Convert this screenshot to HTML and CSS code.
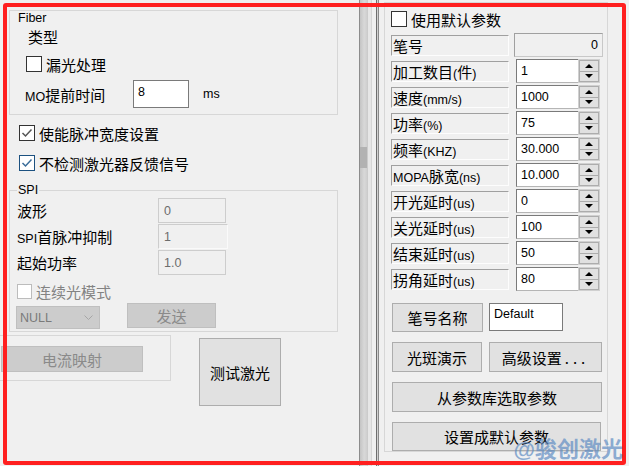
FILE: index.html
```html
<!DOCTYPE html>
<html lang="zh-CN">
<head>
<meta charset="utf-8">
<title>Fiber 参数设置</title>
<link rel="stylesheet" href="styles.css">
</head>
<body>
<div class="app">
  <section class="left">
    <div class="fiber">
      <div class="fiber-title l">Fiber</div>
      <div class="type-label">类型</div>
      <label class="chk chk-leak"><span class="box"></span><span class="chk-text">漏光处理</span></label>
      <div class="mo-row">
        <span class="mo-label"><span class="l">MO</span>提前时间</span>
        <span class="edit mo-edit">8</span>
        <span class="l unit">ms</span>
      </div>
    </div>

    <label class="chk chk-pulse"><span class="box"><svg width="14" height="14" viewBox="0 0 14 14"><polyline points="2.5,7 5.5,10 11.5,3.5" fill="none" stroke="#555" stroke-width="1.5"/></svg></span><span class="chk-text">使能脉冲宽度设置</span></label>
    <label class="chk chk-feedback"><span class="box focus"><svg width="14" height="14" viewBox="0 0 14 14"><polyline points="2.5,7 5.5,10 11.5,3.5" fill="none" stroke="#3a6d9a" stroke-width="1.5"/></svg></span><span class="chk-text">不检测激光器反馈信号</span></label>

    <fieldset class="spi">
      <legend class="l">SPI</legend>
      <div class="spi-row"><span class="spi-label">波形</span><span class="dis-edit">0</span></div>
      <div class="spi-row"><span class="spi-label"><span class="l">SPI</span>首脉冲抑制</span><span class="dis-edit wide">1</span></div>
      <div class="spi-row"><span class="spi-label">起始功率</span><span class="dis-edit">1.0</span></div>
      <label class="chk chk-cw disabled"><span class="box"></span><span class="chk-text">连续光模式</span></label>
      <div class="spi-actions">
        <div class="combo"><span class="l">NULL</span><svg width="9" height="5" viewBox="0 0 9 5"><polyline points="0.5,0.5 4.5,4.5 8.5,0.5" fill="none" stroke="#a6a6a6"/></svg></div>
        <button class="btn btn-dis send-btn">发送</button>
      </div>
    </fieldset>

    <div class="bottom-row">
      <div class="map-group"><button class="btn btn-dis map-btn">电流映射</button></div>
      <button class="btn test-btn">测试激光</button>
    </div>
  </section>

  <div class="scroll"><div class="thumb"></div></div>
  <div class="splitter"></div>

  <section class="right">
    <div class="param-group">
      <label class="chk chk-default"><span class="box"></span><span class="chk-text">使用默认参数</span></label>
      <div class="params">
        <div class="prow"><span class="pname">笔号</span><span class="pvalue l">0</span></div>
        <div class="prow"><span class="pname">加工数目<span class="l">(</span>件<span class="l">)</span></span><span class="pinput">1</span><span class="spin"><span class="sb"><svg width="8" height="4" viewBox="0 0 8 4"><polygon points="4,0 8,4 0,4" fill="#000"/></svg></span><span class="sb"><svg width="8" height="4" viewBox="0 0 8 4"><polygon points="0,0 8,0 4,4" fill="#000"/></svg></span></span></div>
        <div class="prow"><span class="pname">速度<span class="l">(mm/s)</span></span><span class="pinput">1000</span><span class="spin"><span class="sb"><svg width="8" height="4" viewBox="0 0 8 4"><polygon points="4,0 8,4 0,4" fill="#000"/></svg></span><span class="sb"><svg width="8" height="4" viewBox="0 0 8 4"><polygon points="0,0 8,0 4,4" fill="#000"/></svg></span></span></div>
        <div class="prow"><span class="pname">功率<span class="l">(%)</span></span><span class="pinput">75</span><span class="spin"><span class="sb"><svg width="8" height="4" viewBox="0 0 8 4"><polygon points="4,0 8,4 0,4" fill="#000"/></svg></span><span class="sb"><svg width="8" height="4" viewBox="0 0 8 4"><polygon points="0,0 8,0 4,4" fill="#000"/></svg></span></span></div>
        <div class="prow"><span class="pname">频率<span class="l">(KHZ)</span></span><span class="pinput">30.000</span><span class="spin"><span class="sb"><svg width="8" height="4" viewBox="0 0 8 4"><polygon points="4,0 8,4 0,4" fill="#000"/></svg></span><span class="sb"><svg width="8" height="4" viewBox="0 0 8 4"><polygon points="0,0 8,0 4,4" fill="#000"/></svg></span></span></div>
        <div class="prow"><span class="pname"><span class="l">MOPA</span>脉宽<span class="l">(ns)</span></span><span class="pinput">10.000</span><span class="spin"><span class="sb"><svg width="8" height="4" viewBox="0 0 8 4"><polygon points="4,0 8,4 0,4" fill="#000"/></svg></span><span class="sb"><svg width="8" height="4" viewBox="0 0 8 4"><polygon points="0,0 8,0 4,4" fill="#000"/></svg></span></span></div>
        <div class="prow"><span class="pname">开光延时<span class="l">(us)</span></span><span class="pinput">0</span><span class="spin"><span class="sb"><svg width="8" height="4" viewBox="0 0 8 4"><polygon points="4,0 8,4 0,4" fill="#000"/></svg></span><span class="sb"><svg width="8" height="4" viewBox="0 0 8 4"><polygon points="0,0 8,0 4,4" fill="#000"/></svg></span></span></div>
        <div class="prow"><span class="pname">关光延时<span class="l">(us)</span></span><span class="pinput">100</span><span class="spin"><span class="sb"><svg width="8" height="4" viewBox="0 0 8 4"><polygon points="4,0 8,4 0,4" fill="#000"/></svg></span><span class="sb"><svg width="8" height="4" viewBox="0 0 8 4"><polygon points="0,0 8,0 4,4" fill="#000"/></svg></span></span></div>
        <div class="prow"><span class="pname">结束延时<span class="l">(us)</span></span><span class="pinput">50</span><span class="spin"><span class="sb"><svg width="8" height="4" viewBox="0 0 8 4"><polygon points="4,0 8,4 0,4" fill="#000"/></svg></span><span class="sb"><svg width="8" height="4" viewBox="0 0 8 4"><polygon points="0,0 8,0 4,4" fill="#000"/></svg></span></span></div>
        <div class="prow"><span class="pname">拐角延时<span class="l">(us)</span></span><span class="pinput">80</span><span class="spin"><span class="sb"><svg width="8" height="4" viewBox="0 0 8 4"><polygon points="4,0 8,4 0,4" fill="#000"/></svg></span><span class="sb"><svg width="8" height="4" viewBox="0 0 8 4"><polygon points="0,0 8,0 4,4" fill="#000"/></svg></span></span></div>
      </div>
      <div class="brow brow-a">
        <button class="btn pen-btn">笔号名称</button>
        <span class="edit name-edit">Default</span>
      </div>
      <div class="brow">
        <button class="btn spot-btn">光斑演示</button>
        <button class="btn adv-btn">高级设置<span class="dots">...</span></button>
      </div>
      <div class="brow">
        <button class="btn lib-btn">从参数库选取参数</button>
      </div>
      <div class="brow">
        <button class="btn def-btn">设置成默认参数</button>
      </div>
    </div>
  </section>
</div>
<div class="frame"></div>
<div class="watermark">@骏创激光</div>
</body>
</html>
```

FILE: styles.css
```css
html, body {
  margin: 0;
  padding: 0;
}
body {
  width: 629px;
  height: 466px;
  overflow: hidden;
  background: #f0f0f0;
  color: #000;
  font-family: "Noto Sans CJK SC", sans-serif;
  font-size: 15px;
  position: relative;
}
.l {
  font-family: "Liberation Sans", "Noto Sans CJK SC", sans-serif;
  font-size: 12.5px;
}
.app {
  display: flex;
  height: 466px;
}

/* ---------- left panel ---------- */
.left {
  width: 359px;
  flex: none;
}
.fiber {
  box-sizing: border-box;
  margin: 10px 0 0 9px;
  width: 329px;
  height: 105px;
  border: 1px solid #d7d7d7;
}
.fiber-title {
  height: 14px;
  line-height: 14px;
  padding-left: 8px;
}
.type-label {
  height: 24px;
  line-height: 24px;
  margin-left: 18px;
}
.chk {
  display: flex;
  align-items: center;
  white-space: nowrap;
}
.chk .box {
  box-sizing: border-box;
  width: 16px;
  height: 16px;
  border: 1px solid #333;
  background: #fff;
  display: flex;
  align-items: center;
  justify-content: center;
  flex: none;
}
.chk .box.focus {
  border-color: #1c5180;
}
.chk-text {
  margin-left: 4px;
}
.chk-leak {
  height: 24px;
  margin: 3px 0 0 16px;
}
.mo-row {
  display: flex;
  align-items: center;
  height: 28px;
  margin: 4px 0 0 15px;
}
.mo-label {
  width: 108px;
  white-space: nowrap;
}
.edit {
  box-sizing: border-box;
  background: #fff;
  border: 1px solid #7a7a7a;
  font-family: "Liberation Sans", sans-serif;
  font-size: 12.5px;
  line-height: 14px;
  padding: 4px 4px;
}
.mo-edit {
  width: 56px;
  height: 28px;
}
.unit {
  margin-left: 14px;
}
.chk-pulse {
  height: 22px;
  margin: 7px 0 0 19px;
}
.chk-feedback {
  height: 22px;
  margin: 8px 0 0 19px;
}

.spi {
  box-sizing: border-box;
  margin: 9px 0 0 9px;
  width: 329px;
  padding: 0 0 2px 0;
  border: 1px solid #d7d7d7;
}
.spi legend {
  padding: 0 1px;
  margin-left: 7px;
  line-height: 14px;
  height: 14px;
}
.spi-row {
  display: flex;
  align-items: center;
  height: 25px;
  margin-top: 1px;
}
.spi-label {
  width: 141px;
  margin-left: 7px;
  white-space: nowrap;
}
.dis-edit {
  box-sizing: border-box;
  width: 68px;
  height: 25px;
  border: 1px solid #cdcdcd;
  background: #f0f0f0;
  color: #6d6d6d;
  font-family: "Liberation Sans", sans-serif;
  font-size: 12.5px;
  display: flex;
  align-items: center;
  padding-left: 5px;
}
.dis-edit.wide {
  width: 70px;
  border-right-color: #fafafa;
  border-bottom-color: #fafafa;
}
.chk-cw {
  height: 20px;
  margin: 6px 0 0 7px;
}
.chk.disabled .box {
  width: 15px;
  height: 15px;
  border-color: #bcbcbc;
}
.chk.disabled .chk-text {
  color: #838383;
}
.spi-actions {
  display: flex;
  align-items: flex-start;
  height: 26px;
  margin-top: 2px;
}
.combo {
  box-sizing: border-box;
  margin: 3px 0 0 6px;
  width: 84px;
  height: 23px;
  background: #cccccc;
  border: 1px solid #bfbfbf;
  color: #7a7a7a;
  display: flex;
  align-items: center;
  justify-content: space-between;
  padding: 0 6px 0 3px;
}
.btn {
  box-sizing: border-box;
  font-family: "Noto Sans CJK SC", sans-serif;
  font-size: 15px;
  color: #000;
  background: #e1e1e1;
  border: 1px solid #adadad;
  padding: 0;
  margin: 0;
  display: flex;
  align-items: center;
  justify-content: center;
  white-space: nowrap;
}
.btn-dis {
  background: #cccccc;
  border-color: #bfbfbf;
  color: #8a8a8a;
}
.send-btn {
  width: 89px;
  height: 25px;
  margin-left: 27px;
}
.bottom-row {
  display: flex;
  align-items: flex-start;
}
.map-group {
  box-sizing: border-box;
  width: 171px;
  height: 46px;
  margin-top: 3px;
  border: 1px solid #d7d7d7;
  border-left: none;
  padding: 10px 0 0 1px;
}
.map-btn {
  width: 142px;
  height: 26px;
}
.test-btn {
  width: 82px;
  height: 68px;
  margin: 6px 0 0 28px;
}

/* ---------- scrollbar & splitter ---------- */
.scroll {
  box-sizing: border-box;
  width: 8px;
  flex: none;
  border-left: 1px solid #8c8c8c;
  background: linear-gradient(to right, #c4c4c4, #d8d8d8 60%, #cfcfcf);
}
.thumb {
  margin-top: 147px;
  height: 21px;
  background: #b2b2b2;
}
.splitter {
  width: 13px;
  flex: none;
  background: linear-gradient(to right,
    #cbcbcb 0 1px, #e6e6e6 1px 4px, #d6d6d6 4px 5px, #f0f0f0 5px 9px,
    #6e6e6e 9px 10px, #d2d2d2 10px 11px, #8a8a8a 11px 12px, #f0f0f0 12px 13px);
}

/* ---------- right panel ---------- */
.right {
  flex: 1;
  padding-left: 4px;
}
.param-group {
  box-sizing: border-box;
  margin-top: 2px;
  width: 224px;
  height: 450px;
  border: 1px solid #d7d7d7;
}
.chk-default {
  height: 20px;
  margin: 6px 0 0 6px;
}
.params {
  display: flex;
  flex-direction: column;
  gap: 2px;
  margin-top: 4px;
}
.prow {
  display: flex;
  align-items: flex-start;
  height: 24px;
}
.pname {
  box-sizing: border-box;
  width: 118px;
  height: 21px;
  margin: 2px 0 0 6px;
  border-top: 1px solid #a0a0a0;
  border-left: 1px solid #a0a0a0;
  border-right: 1px solid #fdfdfd;
  border-bottom: 1px solid #fdfdfd;
  line-height: 19px;
  padding-left: 1px;
  white-space: nowrap;
  overflow: hidden;
}
.pvalue {
  box-sizing: border-box;
  width: 89px;
  height: 24px;
  margin-left: 5px;
  border: 1px solid #a0a0a0;
  border-right-color: #c8c8c8;
  border-bottom-color: #c8c8c8;
  background: #f0f0f0;
  display: flex;
  align-items: center;
  justify-content: flex-end;
  padding-right: 4px;
}
.pinput {
  box-sizing: border-box;
  width: 62px;
  height: 24px;
  margin-left: 7px;
  background: #fff;
  border: 1px solid #7a7a7a;
  border-right: none;
  border-bottom-color: #b5b5b5;
  font-family: "Liberation Sans", sans-serif;
  font-size: 12.5px;
  display: flex;
  align-items: center;
  padding-left: 4px;
}
.spin {
  box-sizing: border-box;
  width: 22px;
  height: 24px;
  border: 1px solid #d0d0d0;
  padding: 0;
  display: flex;
  flex-direction: column;
}
.sb {
  box-sizing: border-box;
  flex: 1;
  border: 1px solid #adadad;
  background: #e1e1e1;
  display: flex;
  align-items: center;
  justify-content: center;
}
.sb + .sb {
  border-top: none;
}
.brow {
  display: flex;
  margin: 10px 0 0 7px;
}
.brow-a {
  margin-top: 12px;
}
.pen-btn {
  width: 91px;
  height: 29px;
}
.name-edit {
  width: 74px;
  height: 28px;
  margin-left: 6px;
  padding: 3px 4px;
}
.spot-btn {
  width: 90px;
  height: 30px;
}
.adv-btn {
  width: 113px;
  height: 30px;
  margin-left: 7px;
}
.dots {
  letter-spacing: 4px;
  margin-left: 3px;
}
.lib-btn {
  width: 210px;
  height: 30px;
}
.def-btn {
  width: 209px;
  height: 29px;
}

/* ---------- overlays ---------- */
.frame {
  position: absolute;
  left: 3px;
  top: 3px;
  width: 623px;
  height: 462px;
  box-sizing: border-box;
  border: 4px solid #ff1f1f;
  border-radius: 3px;
  pointer-events: none;
}
.watermark {
  position: absolute;
  right: 6px;
  top: 438px;
  font-family: "Liberation Sans", "Noto Sans CJK SC", sans-serif;
  font-size: 22px;
  font-weight: bold;
  line-height: 24px;
  color: rgba(95, 140, 195, 0.7);
  white-space: nowrap;
}
```
